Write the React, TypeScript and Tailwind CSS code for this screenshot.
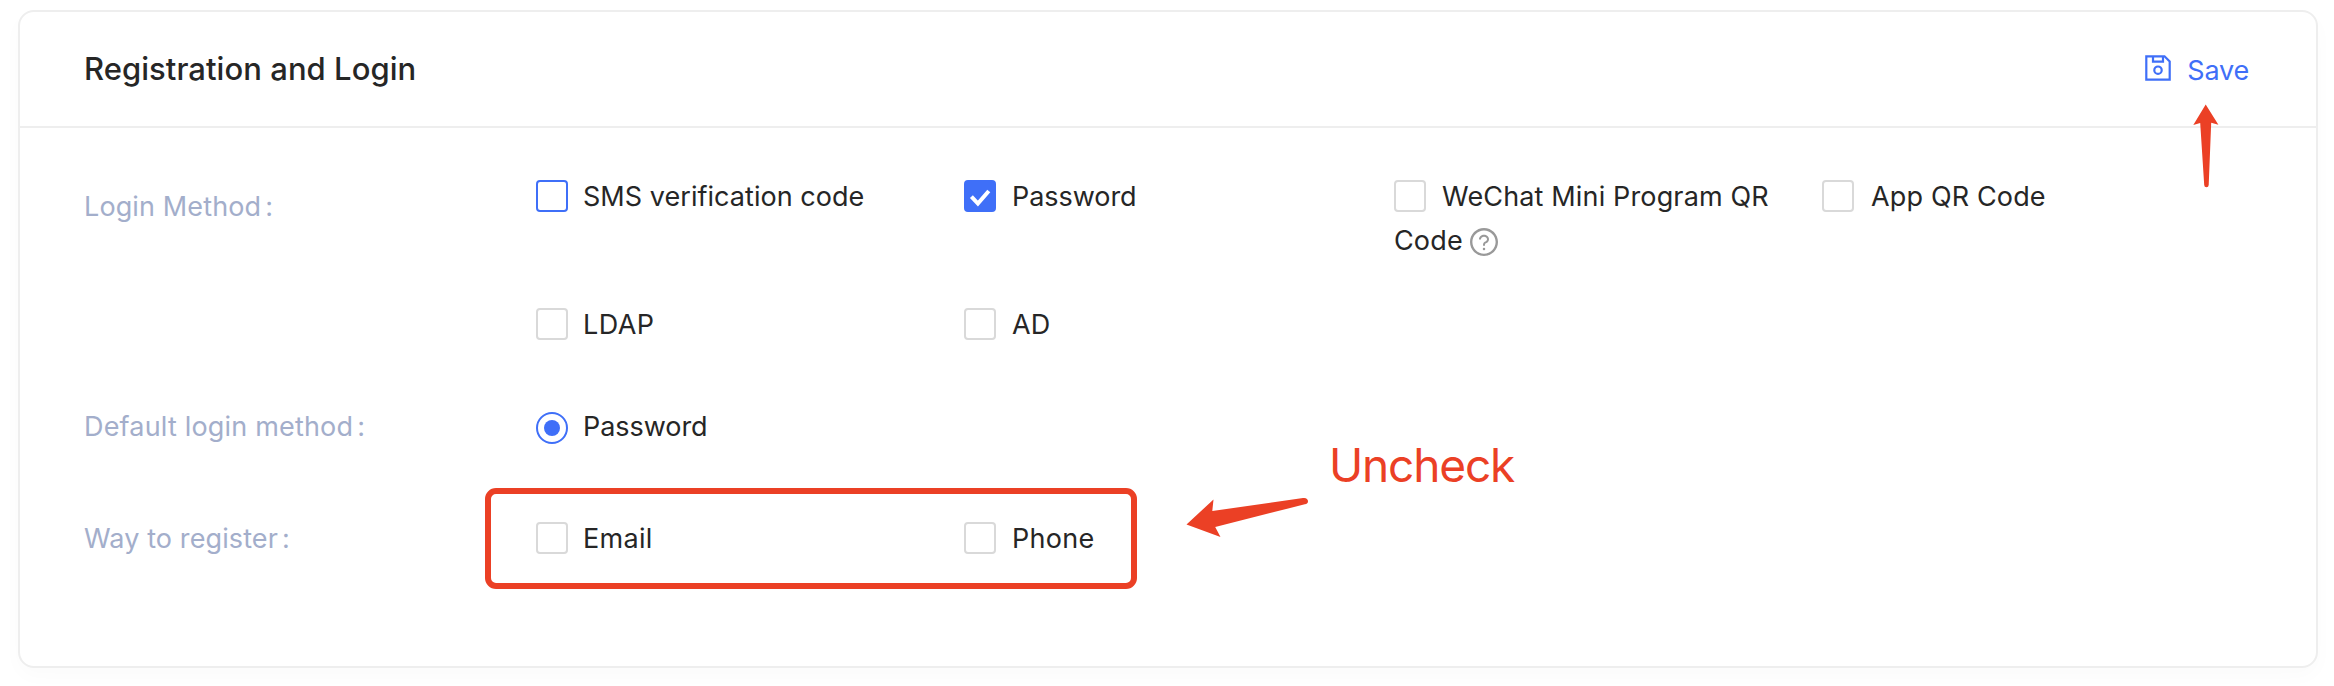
import type { ReactNode } from "react";
import { AiOutlineQuestionCircle } from "react-icons/ai";

type BoxState = "off" | "focus" | "on";

const boxStyles: Record<BoxState, string> = {
  off: "border-[#d9d9d9] bg-white",
  focus: "border-[#3f6ff8] bg-white",
  on: "border-[#3f6ff8] bg-[#3f6ff8]",
};

function Checkbox({
  state = "off",
  children,
  tracking = "",
  gap = "mr-[15px]",
}: {
  state?: BoxState;
  children: ReactNode;
  tracking?: string;
  gap?: string;
}) {
  return (
    <label className={`block leading-[44px] ${tracking}`}>
      <span className={`mt-[5px] inline-block size-8 rounded-[4px] border-2 align-top ${gap} ${boxStyles[state]}`}>
        {state === "on" && (
          <svg viewBox="0 0 28 28" className="block size-7" fill="none" stroke="#fff" strokeWidth="4">
            <path d="M5.4 14.6l6.5 6.9L22.8 9" />
          </svg>
        )}
      </span>
      {children}
    </label>
  );
}

function Label({ children, className = "" }: { children: ReactNode; className?: string }) {
  return (
    <div className={`w-[452px] shrink-0 leading-[44px] text-[#a3aecb] ${className}`}>
      {children}
      <span className="ml-[4px] tracking-normal">:</span>
    </div>
  );
}

function SaveIcon() {
  return (
    <svg viewBox="0 0 26 26" className="size-[26px]" fill="none" stroke="currentColor" strokeWidth="2.2">
      <path d="M1.3 1.3h18.2l5.2 5.2v18.2H1.3z" />
      <path d="M8 1.3v5.4h10V1.3" />
      <circle cx="13" cy="15.2" r="3.7" />
    </svg>
  );
}

export default function App() {
  return (
    <div className="relative h-[686px] w-[2334px] overflow-hidden bg-white px-[16px] pt-[10px] pl-[18px] font-[Inter,sans-serif] text-[27px] text-[#262626]">
      <section className="h-[658px] w-[2300px] rounded-[16px] border-2 border-[#eeeeee] bg-white shadow-[0_8px_20px_rgba(20,50,40,0.018)]">
        <header className="flex h-[116px] items-center justify-between border-b-2 border-[#eeeeee] pr-[67px] pl-[64px]">
          <h1 className="text-[31px] leading-[44px] font-medium tracking-[0.05px]">Registration and Login</h1>
          <button className="flex items-center text-[#3f6ff8]">
            <span className="pb-[2px]">
              <SaveIcon />
            </span>
            <span className="ml-[16px] pt-[4px] leading-[44px] tracking-[-0.2px]">Save</span>
          </button>
        </header>

        <div className="pt-[47px] pl-[64px]">
          <div className="flex">
            <Label className="pt-[10px] tracking-[0.12px]">Login Method</Label>
            <div className="grid grid-cols-[428px_430px_428px_428px] gap-y-[40px]">
              <Checkbox state="focus" tracking="tracking-[0.04px]">
                SMS verification code
              </Checkbox>
              <Checkbox state="on" gap="mr-[16px]" tracking="tracking-[-0.05px]">
                Password
              </Checkbox>
              <Checkbox tracking="tracking-[0.15px]" gap="mr-[16px]">
                WeChat Mini Program QR Code
                <AiOutlineQuestionCircle className="mt-[7px] ml-[5px] inline-block size-8 align-top text-[#999999]" />
              </Checkbox>
              <Checkbox tracking="tracking-[0.15px]" gap="mr-[17px]">
                App QR Code
              </Checkbox>
              <Checkbox tracking="tracking-[0.4px]">LDAP</Checkbox>
              <Checkbox gap="mr-[16px]">AD</Checkbox>
            </div>
          </div>

          <div className="mt-[58px] flex">
            <Label className="tracking-[0.18px]">Default login method</Label>
            <label className="flex leading-[44px] tracking-[-0.05px]">
              <span className="mt-[7px] mr-[15px] flex size-8 items-center justify-center rounded-full border-2 border-[#3f6ff8]">
                <span className="size-4 rounded-full bg-[#3f6ff8]" />
              </span>
              Password
            </label>
          </div>

          <div className="mt-[68px] flex">
            <Label className="tracking-[0.1px]">Way to register</Label>
            <div className="grid grid-cols-[428px_430px_428px_428px]">
              <Checkbox tracking="tracking-[0.3px]">Email</Checkbox>
              <Checkbox tracking="tracking-[0.3px]" gap="mr-[16px]">
                Phone
              </Checkbox>
            </div>
          </div>
        </div>
      </section>

      <div className="absolute top-[488px] left-[485px] h-[101px] w-[652px] rounded-[11px] border-[6px] border-[#eb4025]" />
      <span className="absolute top-[437px] left-[1329px] text-[46px] leading-[56px] tracking-[-1.15px] text-[#eb4025]">Uncheck</span>
      <svg viewBox="0 0 124 42" className="absolute top-[498px] left-[1185px] h-[42px] w-[124px] overflow-visible" fill="#eb4025">
        <path d="M1.5 26.5L28.5 1.5L27.3 13L118 .1C121-.4 123 1 123 3.2C123 5 122 5.8 119.8 6.3L30.2 29L35.5 39z" />
      </svg>
      <svg viewBox="0 0 26 84" className="absolute top-[104px] left-[2193px] h-[84px] w-[26px]" fill="#eb4025">
        <path d="M12.7.5L25.4 20.8L18.2 18.7L15.7 81Q15.5 83.2 13.5 83.2Q11.3 83.2 11.2 81L7.2 19L.3 21z" />
      </svg>
    </div>
  );
}
